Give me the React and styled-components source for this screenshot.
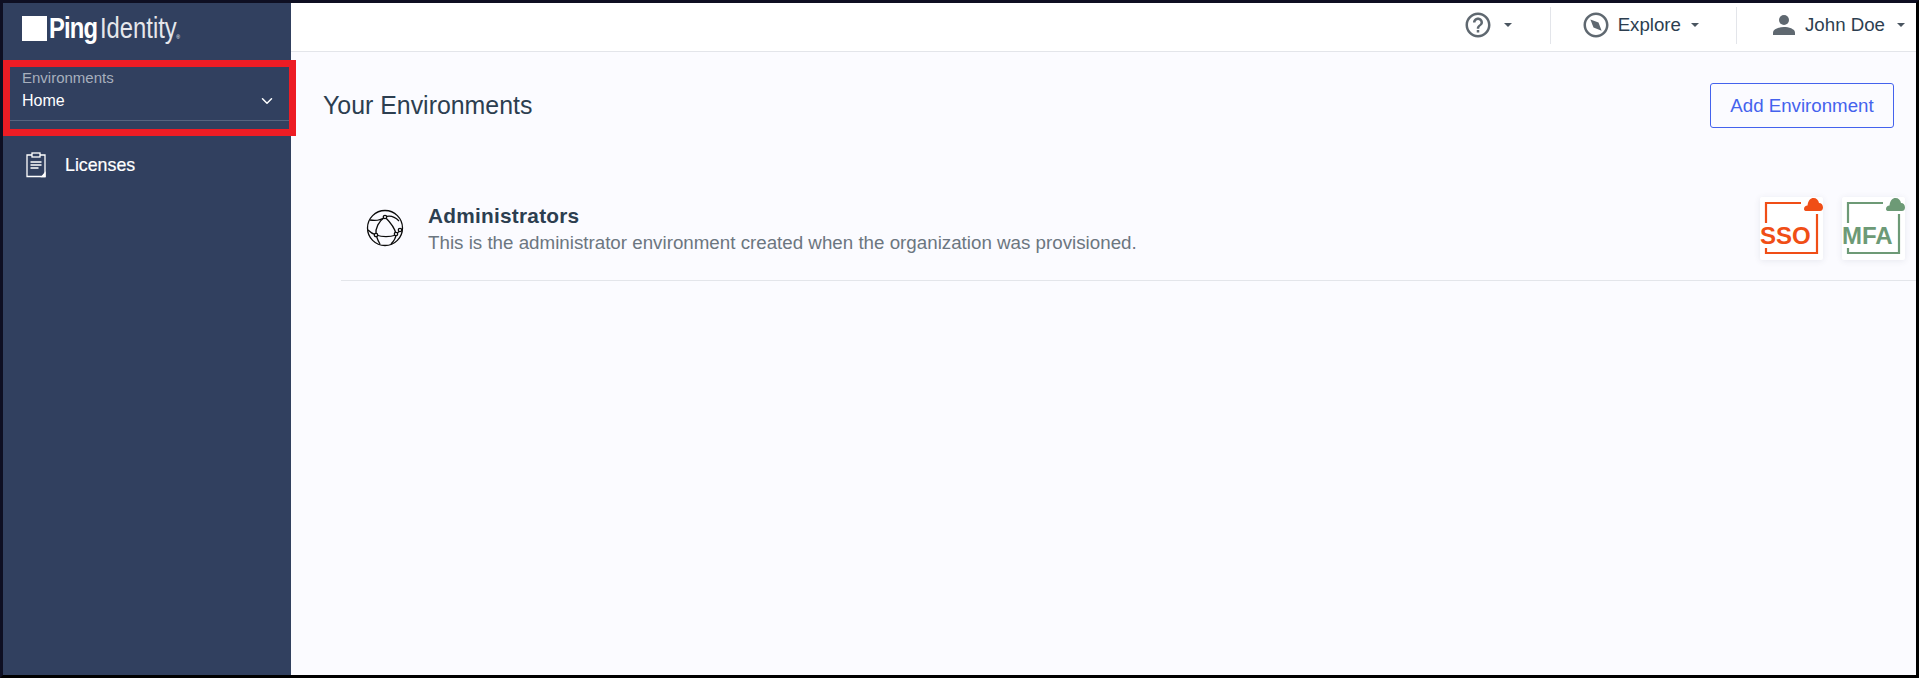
import React from 'react'
import styled, { createGlobalStyle } from 'styled-components'
import { ChevronDown } from 'lucide-react'

const GlobalStyle = createGlobalStyle`
  html, body { margin: 0; padding: 0; background: #000; }
  body { font-family: 'Liberation Sans', Arial, sans-serif; }
  * { box-sizing: border-box; }
`

const Frame = styled.div`
  position: relative;
  display: flex;
  width: 1919px;
  height: 678px;
  overflow: hidden;
  border: 3px solid #000;
  border-top-color: #0e0f22;
  border-left-color: #0e0f22;
`

const Sidebar = styled.aside`
  width: 288px;
  flex: none;
  background: #31405f;
  color: #fff;
`

const Logo = styled.div`
  display: flex;
  align-items: center;
  height: 56px;
  padding: 0 0 6px 19px;
  color: #fff;
`

const LogoMark = styled.span`
  width: 25px;
  height: 25px;
  margin-right: 2px;
  background: #fff;
`

const LogoPing = styled.span`
  display: inline-block;
  margin-right: -10px;
  font-size: 29px;
  font-weight: 700;
  letter-spacing: -1px;
  transform: scaleX(0.82);
  transform-origin: left center;
`

const LogoIdentity = styled.span`
  display: inline-block;
  margin: 0 -18px 0 2px;
  font-size: 29px;
  font-weight: 400;
  opacity: 0.88;
  transform: scaleX(0.82);
  transform-origin: left center;
`

const LogoMarkR = styled.sup`
  font-size: 5px;
  align-self: flex-end;
  margin: 0 0 13px 1px;
`

const Picker = styled.div`
  position: relative;
  margin-left: 7px;
  padding: 10px 0 0 12px;
  height: 62px;
  border-bottom: 1px solid #57647f;
`

const PickerLabel = styled.div`
  font-size: 15px;
  line-height: 18px;
  color: #a7afbd;
`

const PickerRow = styled.div`
  display: flex;
  align-items: center;
  justify-content: space-between;
  padding-right: 15px;
  margin-top: 5px;
  font-size: 16px;
  line-height: 18px;
`

const NavItem = styled.a`
  display: flex;
  align-items: center;
  gap: 18px;
  margin-top: 31px;
  padding-left: 22px;
  font-size: 17.8px;
  color: #fff;
  -webkit-text-stroke: 0.2px #fff;
`

const Highlight = styled.div`
  position: absolute;
  left: 0;
  top: 57px;
  width: 293px;
  height: 76px;
  border: 7px solid #ed1c24;
  pointer-events: none;
`

const Main = styled.main`
  flex: 1;
  min-width: 0;
  display: flex;
  flex-direction: column;
  background: #fbfbff;
`

const TopBar = styled.header`
  display: flex;
  justify-content: flex-end;
  align-items: center;
  height: 49px;
  padding-bottom: 4px;
  flex: none;
  background: #fff;
  border-bottom: 1px solid #e3e5ea;
`

const TopItem = styled.div`
  display: flex;
  align-items: center;
  height: 37px;
  gap: ${p => p.$gap || 10}px;
  padding: 0 ${p => p.$right || 31}px 0 ${p => p.$left || 33}px;
  font-size: 18.7px;
  color: #2c3e50;
  border-right: ${p => (p.$divider ? '1px solid #e3e5ea' : 'none')};
`

const Caret = styled.span`
  width: 0;
  height: 0;
  margin-left: ${p => p.$offset || 4}px;
  border-left: 4px solid transparent;
  border-right: 4px solid transparent;
  border-top: 4px solid #4a5560;
`

const Content = styled.div`
  flex: 1;
  padding: 31px 22px 0 32px;
`

const TitleRow = styled.div`
  display: flex;
  align-items: center;
  justify-content: space-between;
`

const Title = styled.h1`
  margin: 0;
  font-size: 24.9px;
  font-weight: 400;
  color: #2c3e50;
`

const AddButton = styled.button`
  width: 184px;
  height: 45px;
  padding: 0;
  font-family: inherit;
  font-size: 18.7px;
  color: #4462ed;
  background: transparent;
  border: 1px solid #4462ed;
  border-radius: 3px;
`

const EnvRow = styled.div`
  display: flex;
  align-items: center;
  height: 102px;
  margin: 51px -22px 0 18px;
  padding: 0 11px 3px 25px;
  border-bottom: 1px solid #e3e5ea;
`

const EnvIcon = styled.svg`
  width: 38px;
  height: 38px;
  margin-right: 24px;
  flex: none;
`

const EnvText = styled.div`
  flex: 1;
  margin-top: 3px;
`

const EnvName = styled.div`
  font-size: 20.8px;
  line-height: 26px;
  font-weight: 700;
  letter-spacing: 0.25px;
  color: #2c3e50;
`

const EnvDesc = styled.div`
  font-size: 18.75px;
  line-height: 28px;
  color: #6c7680;
`

const ProductTile = styled.div`
  position: relative;
  width: 63px;
  height: 63px;
  margin-left: 19px;
  flex: none;
  background: #fff;
  border-radius: 2px;
  box-shadow: 0 1px 6px rgba(60, 70, 100, 0.1);
  color: ${p => p.$color};
`

const ProductFrame = styled.svg`
  position: absolute;
  inset: 0;
  width: 63px;
  height: 63px;
`

const ProductLabel = styled.span`
  position: absolute;
  left: 0;
  top: 27px;
  padding: 0 1px 0 0;
  background: #fff;
  font-size: 24px;
  line-height: 24px;
  font-weight: 700;
`

function HelpIcon () {
  return (
    <svg width='30' height='30' viewBox='0 0 24 24' fill='#5f6870'>
      <path d='M11 18h2v-2h-2v2zm1-16C6.480 2 2 6.480 2 12s4.480 10 10 10 10-4.480 10-10S17.520 2 12 2zm0 18c-4.410 0-8-3.590-8-8s3.590-8 8-8 8 3.590 8 8-3.590 8-8 8zm0-14c-2.210 0-4 1.790-4 4h2c0-1.100.9-2 2-2s2 .9 2 2c0 2-3 1.750-3 5h2c0-2.250 3-2.500 3-5 0-2.210-1.790-4-4-4z' />
    </svg>
  )
}

function CompassIcon () {
  return (
    <svg width='30' height='30' viewBox='0 0 24 24' fill='#5f6870'>
      <path d='M12 2C6.480 2 2 6.480 2 12s4.480 10 10 10 10-4.480 10-10S17.520 2 12 2zm0 18c-4.410 0-8-3.590-8-8s3.590-8 8-8 8 3.590 8 8-3.590 8-8 8z' />
      <path d='M7.500 7.500l6.500 2.500 2.500 6.500-6.500-2.500z' />
    </svg>
  )
}

function PersonIcon () {
  return (
    <svg width='24' height='24' viewBox='0 0 24 24' fill='#5f6870'>
      <circle cx='12' cy='7' r='5' />
      <path d='M1 22v-2.500C1 15.800 7.500 14 12 14s11 1.800 11 5.500V22z' />
    </svg>
  )
}

function ClipboardIcon () {
  return (
    <svg width='22' height='26' viewBox='0 0 22 26' fill='none' stroke='#fff' strokeWidth='1.3'>
      <path d='M7 3H2v21.500h18V3h-5' />
      <rect x='7' y='1' width='8' height='4' />
      <path d='M5.500 10h11M5.500 13h11M5.500 16h8' />
      <path d='M20 21l-3 3.500h3z' fill='#fff' />
    </svg>
  )
}

function GlobeIcon () {
  return (
    <EnvIcon viewBox='0 0 38 38' fill='none' stroke='#0c0c0c' strokeWidth='1.3'>
      <circle cx='19' cy='19' r='17.5' />
      <path d='M4 11c5 1 11 0 15-3 5-2 10 0 14 4' />
      <path d='M19 8C13 12 9 19 10 26c1 3 2 6 4 9' />
      <path d='M19 8c5 5 10 11 11 17 0 4-2 7-5 10' />
      <path d='M10 26c6 2 14 2 20 0' />
      <path d='M30 25l5-4' />
      <path d='M2 21c2 2 5 4 8 5' />
      <circle cx='19' cy='8' r='1.700' fill='#fbfbff' />
      <circle cx='10' cy='26' r='1.700' fill='#fbfbff' />
      <circle cx='30' cy='25' r='1.700' fill='#fbfbff' />
      <circle cx='34' cy='21' r='1.700' fill='#fbfbff' />
    </EnvIcon>
  )
}

function ProductBadge ({ label, color }) {
  return (
    <ProductTile $color={color}>
      <ProductFrame viewBox='0 0 63 63' fill='none'>
        <path d='M6 26V6h35M57 17v39H6v-6' stroke={color} strokeWidth='2.200' />
        <path d='M44 12c0-2 1.500-3.500 3.500-3.500C48.300 3 50.500 1 53.500 1c3 0 5 2 5.500 5 2.500 0 4 2 4 4.500S61.500 14 60 14H46.500C45 14 44 13.500 44 12z' fill={color} />
      </ProductFrame>
      <ProductLabel>{label}</ProductLabel>
    </ProductTile>
  )
}

export default function App () {
  return (
    <>
      <GlobalStyle />
      <Frame>
        <Sidebar>
          <Logo>
            <LogoMark />
            <LogoPing>Ping</LogoPing>
            <LogoIdentity>Identity</LogoIdentity>
            <LogoMarkR>®</LogoMarkR>
          </Logo>
          <Picker>
            <PickerLabel>Environments</PickerLabel>
            <PickerRow>
              Home
              <ChevronDown size={18} color='#fff' />
            </PickerRow>
          </Picker>
          <NavItem>
            <ClipboardIcon />
            Licenses
          </NavItem>
        </Sidebar>
        <Main>
          <TopBar>
            <TopItem $divider $left={1} $right={38} $gap={7}>
              <HelpIcon />
              <Caret />
            </TopItem>
            <TopItem $divider $left={30} $right={37} $gap={7}>
              <CompassIcon />
              Explore
              <Caret $offset={3} />
            </TopItem>
            <TopItem $left={35} $right={11} $gap={9}>
              <PersonIcon />
              John Doe
              <Caret $offset={3} />
            </TopItem>
          </TopBar>
          <Content>
            <TitleRow>
              <Title>Your Environments</Title>
              <AddButton>Add Environment</AddButton>
            </TitleRow>
            <EnvRow>
              <GlobeIcon />
              <EnvText>
                <EnvName>Administrators</EnvName>
                <EnvDesc>This is the administrator environment created when the organization was provisioned.</EnvDesc>
              </EnvText>
              <ProductBadge label='SSO' color='#f04e16' />
              <ProductBadge label='MFA' color='#6d9a76' />
            </EnvRow>
          </Content>
        </Main>
        <Highlight />
      </Frame>
    </>
  )
}
